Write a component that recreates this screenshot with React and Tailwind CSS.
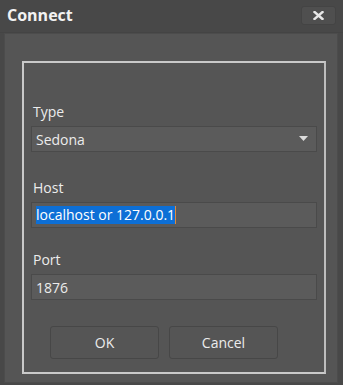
export default function App() {
  return (
    <div className="w-[343px] h-[385px] bg-[#484848] flex flex-col" style={{ fontFamily: "'Open Sans', sans-serif" }}>
      <div className="h-[33px] flex items-center justify-between pl-[7px] pr-[7px] border-b border-[#444]">
        <span className="text-[16px] font-bold text-[#f2f2f2] leading-[18px] -mt-[2px]">Connect</span>
        <div className="w-[35px] h-[19px] rounded-[3px] bg-[#4f4f4f] border border-[#444] flex items-center justify-center -mt-[2px]">
          <svg width="11" height="9" viewBox="0 0 11 9">
            <path d="M1.5 1 L9.5 8 M9.5 1 L1.5 8" stroke="#e6e6e6" strokeWidth="2.4" strokeLinecap="square" />
          </svg>
        </div>
      </div>
      <div className="ml-[4px] mr-[5px] mb-[2px] flex-1 bg-[#555555] border border-[#4c4c4c] pt-[27px] pb-[8px] pl-[17px] pr-[11px] flex">
        <div className="flex-1 border-2 border-[#c9c9c9] border-r-[#bdbdbd] px-[7px] pt-[40px] flex flex-col">
          <label className="text-[14px] text-[#ececec] leading-[18px] pl-[2px]">Type</label>
          <div className="mt-[5px] h-[26px] bg-[#5b5b5b] border border-[#4a4a4a] flex items-center justify-between pl-[4px] pr-[8px]">
            <span className="text-[14px] text-[#ececec]">Sedona</span>
            <svg width="9" height="6" viewBox="0 0 9 6"><path d="M0 0 H9 L4.5 5 Z" fill="#dcdcdc" /></svg>
          </div>
          <label className="mt-[27px] text-[14px] text-[#ececec] leading-[18px] pl-[2px]">Host</label>
          <div className="mt-[5px] h-[26px] bg-[#5b5b5b] border border-[#4a4a4a] flex items-center pl-[4px]">
            <span className="text-[14px] text-white bg-[#0d6fd6] leading-[18px]">localhost or 127.0.0.1</span>
            <span className="w-[1px] h-[18px] bg-[#e08a3a]"></span>
          </div>
          <label className="mt-[23px] text-[14px] text-[#ececec] leading-[18px] pl-[2px]">Port</label>
          <div className="mt-[5px] h-[26px] bg-[#5b5b5b] border border-[#4a4a4a] flex items-center pl-[4px]">
            <span className="text-[14px] text-[#ececec]">1876</span>
          </div>
          <div className="mt-[26px] flex gap-[10px] pl-[19px]">
            <button className="w-[109px] h-[33px] rounded-[3px] bg-[#555555] border border-[#474747] text-[14px] text-[#ececec]">OK</button>
            <button className="w-[109px] h-[33px] rounded-[3px] bg-[#555555] border border-[#474747] text-[14px] text-[#ececec]">Cancel</button>
          </div>
        </div>
      </div>
    </div>
  );
}
